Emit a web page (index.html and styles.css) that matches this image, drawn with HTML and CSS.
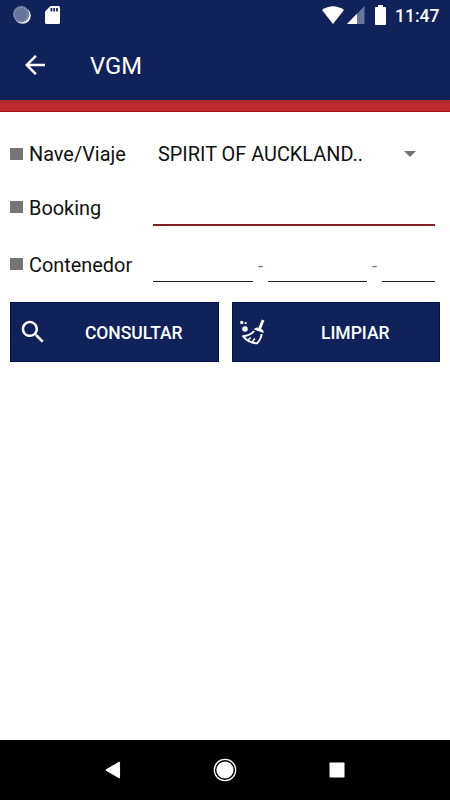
FILE: index.html
```html
<!DOCTYPE html>
<html lang="es">
  <head>
    <meta charset="UTF-8" />
    <meta name="viewport" content="width=device-width, initial-scale=1.0" />
    <title>VGM</title>
    <link rel="stylesheet" href="styles.css">
  </head>
  <body>
    <div class="status-bar">
      <svg class="sync" width="18" height="18" viewBox="0 0 18 18">
        <circle cx="9.6" cy="9.6" r="8.2" fill="#e8ebf4" />
        <circle cx="8.2" cy="8.2" r="8.2" fill="#68749c" />
        <circle cx="8.2" cy="8.2" r="7" fill="none" stroke="#99a2c0" stroke-width="1.4" stroke-dasharray="1 1.4" />
      </svg>
      <svg class="sd-card" width="15" height="18" viewBox="0 0 15 18">
        <path d="M5.5 0H13.5Q15 0 15 1.5V16.5Q15 18 13.5 18H1.5Q0 18 0 16.5V5.5Z" fill="#fff" />
        <path d="M5.5 2h1.8v3.5H5.5zM8.3 2h1.8v3.5H8.3zM11.1 2h1.8v3.5h-1.8z" fill="#11215a" />
      </svg>
      <svg class="wifi" width="22" height="18" viewBox="0 0 22 18">
        <path d="M0 4Q11-3.5 22 4L11 18Z" fill="#fff" />
      </svg>
      <svg class="signal" width="18" height="18" viewBox="0 0 18 18">
        <path d="M17.5 0V18H0Z" fill="#68749c" />
        <path d="M10 7.7V18H0Z" fill="#fff" />
      </svg>
      <svg class="battery" width="11" height="20" viewBox="0 0 11 20">
        <path d="M3 0H8V2H10Q11 2 11 3V19Q11 20 10 20H1Q0 20 0 19V3Q0 2 1 2H3Z" fill="#fff" />
      </svg>
      <span class="clock">11:47</span>
    </div>

    <header>
      <svg class="back" width="30" height="30" viewBox="0 0 24 24">
        <path d="M20 11H7.83l5.59-5.59L12 4l-8 8 8 8 1.41-1.41L7.83 13H20v-2z" fill="#fff" />
      </svg>
      <h1>VGM</h1>
    </header>
    <div class="stripe"></div>

    <main>
      <div class="row">
        <span class="bullet"></span>
        <label>Nave/Viaje</label>
        <div class="select">
          <span>SPIRIT OF AUCKLAND..</span>
          <svg width="12" height="6" viewBox="0 0 12 6"><path d="M0 0H12L6 6Z" fill="#757575" /></svg>
        </div>
      </div>
      <div class="row booking">
        <span class="bullet"></span>
        <label>Booking</label>
        <div class="input focused"></div>
      </div>
      <div class="row container">
        <span class="bullet"></span>
        <label>Contenedor</label>
        <div class="input prefix"></div>
        <span class="dash">-</span>
        <div class="input number"></div>
        <span class="dash">-</span>
        <div class="input digit"></div>
      </div>

      <div class="buttons">
        <button>
          <svg width="30" height="30" viewBox="0 0 24 24">
            <path d="M15.5 14h-.79l-.28-.27C15.41 12.59 16 11.11 16 9.5 16 5.91 13.09 3 9.5 3S3 5.91 3 9.5 5.91 16 9.5 16c1.61 0 3.09-.59 4.23-1.57l.27.28v.79l5 4.99L20.49 19l-4.99-5zm-6 0C7.01 14 5 11.99 5 9.5S7.01 5 9.5 5 14 7.01 14 9.5 11.99 14 9.5 14z" fill="#fff" />
          </svg>
          <span>CONSULTAR</span>
        </button>
        <button>
          <svg width="30" height="30" viewBox="0 0 30 30">
            <g fill="#fff">
              <circle cx="1.8" cy="5.5" r="1.7" />
              <circle cx="5.7" cy="6.2" r="1.1" />
              <circle cx="5" cy="12" r="2.8" />
              <path d="M21.8 2.6 24.4 3.6 21.1 11.8Q24.2 13.2 23.6 16L13.9 12.4Q15.5 10.1 18.5 10.7Z" />
            </g>
            <path d="M14.1 14.2Q9.500 19 3 19.200Q8.500 26.300 17.100 26.300Q21.100 22 21.700 17" fill="none" stroke="#fff" stroke-width="1.9" stroke-linejoin="round" />
            <path d="M8 23 10.8 20.5M12.3 25 14.8 21.5" fill="none" stroke="#fff" stroke-width="1.5" />
          </svg>
          <span>LIMPIAR</span>
        </button>
      </div>
    </main>

    <nav>
      <svg width="16" height="18" viewBox="0 0 16 18">
        <path d="M14.3 1.5V16.5L1.5 9Z" fill="#fff" stroke="#fff" stroke-width="1.5" stroke-linejoin="round" />
      </svg>
      <svg width="24" height="24" viewBox="0 0 24 24">
        <circle cx="12" cy="12" r="10.7" fill="none" stroke="#fff" stroke-width="1.3" />
        <circle cx="12" cy="12" r="8.6" fill="#fff" />
      </svg>
      <svg width="16" height="16" viewBox="0 0 16 16">
        <rect x="0.5" y="0.5" width="15" height="15" rx="0.8" fill="#fff" />
      </svg>
    </nav>
  </body>
</html>
```
FILE: styles.css
```css
/* Reset */
* {
  margin: 0;
  padding: 0;
  box-sizing: border-box;
  font-family: Roboto, sans-serif;
}

body {
  height: 100vh;
  display: flex;
  flex-direction: column;
  background-color: #fff;
  color: #111;
}

svg {
  display: block;
  flex-shrink: 0;
}

/* Status bar */
.status-bar {
  height: 30px;
  padding: 0 11px 0 13px;
  display: flex;
  align-items: center;
  background-color: #11215a;
}

.sd-card {
  margin-left: 14px;
}

.wifi {
  margin-left: auto;
}

.signal {
  margin-left: 3px;
}

.battery {
  margin-left: 10px;
}

.clock {
  width: 44px;
  margin-left: 9px;
  padding-top: 2px;
  color: #fff;
  font-size: 17.5px;
  font-weight: 500;
  line-height: 20px;
  white-space: nowrap;
}

/* Toolbar */
header {
  height: 70px;
  padding-left: 20px;
  display: flex;
  align-items: center;
  background-color: #11215a;
}

header h1 {
  margin-left: 40px;
  padding-top: 2px;
  color: #fff;
  font-size: 23.8px;
  font-weight: 400;
}

.stripe {
  height: 12px;
  background: linear-gradient(#a82829, #bd2b2c 5px, #bd2b2c 11px, #b01116 11px);
}

/* Form */
main {
  flex: 1;
  padding: 15px 10px 0;
}

.row {
  height: 55px;
  display: flex;
  align-items: flex-start;
}

.container {
  height: 65px;
}

.bullet {
  width: 13px;
  height: 12px;
  margin-top: 21px;
  background-color: #757575;
}

.booking .bullet {
  margin-top: 19px;
}

.row label {
  width: 124px;
  margin-left: 6px;
  padding-top: 16px;
  font-size: 19.9px;
  line-height: 24px;
}

.booking label {
  padding-top: 15px;
}

.container label {
  padding-top: 17px;
}

.select {
  flex: 1;
  margin-left: 5px;
  padding: 16px 24px 0 0;
  display: flex;
  align-items: center;
  justify-content: space-between;
  font-size: 19.9px;
  line-height: 24px;
  white-space: nowrap;
}

.select svg {
  margin-bottom: 2px;
}

.input {
  height: 45px;
  border-bottom: 1px solid #222;
}

.input.focused {
  width: 282px;
  height: 44px;
  border-bottom: 2px solid #7c2123;
}

.prefix {
  width: 100px;
}

.number {
  width: 99px;
}

.digit {
  width: 53px;
}

.dash {
  width: 15px;
  padding-top: 17px;
  text-align: center;
  font-size: 18px;
  line-height: 24px;
  color: #757575;
}

/* Buttons */
.buttons {
  display: flex;
  gap: 13px;
}

button {
  flex: 1;
  height: 60px;
  padding: 0 0 0 7px;
  display: flex;
  align-items: center;
  background-color: #11215a;
  border: 1px solid #080f42;
  color: #fff;
}

button span {
  flex: 1;
  padding: 2px 0 0 2px;
  text-align: center;
  font-size: 17.5px;
  font-weight: 500;
}

/* Navigation bar */
nav {
  height: 60px;
  padding: 0 105px;
  display: flex;
  align-items: center;
  justify-content: space-between;
  background-color: #000;
}
```
